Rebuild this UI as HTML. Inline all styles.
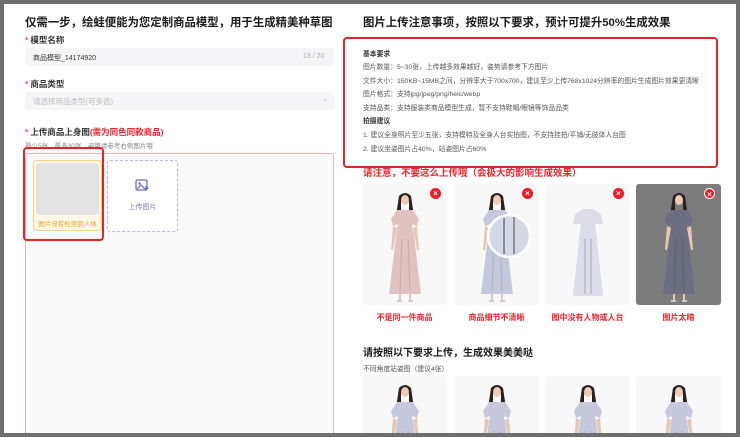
<!DOCTYPE html>
<html><head><meta charset="utf-8"><style>
*{margin:0;padding:0;box-sizing:border-box}
body{width:740px;height:437px;background:#6f6f6f;position:relative;overflow:hidden;font-family:"Liberation Sans","Noto Sans CJK SC",sans-serif;color:#222}
.panel{position:absolute;left:4px;top:4px;width:732px;height:429px;background:#fff;overflow:hidden}
.a{position:absolute;white-space:nowrap}
.h1{font-size:11.4px;font-weight:bold;color:#1a1a1a}
.lab{font-size:8.5px;font-weight:bold;color:#333}
.lab i{color:#f0507a;font-style:normal;margin-right:2px}
.box{position:absolute;background:#f5f5f7;border-radius:3px}
.req{font-size:6.8px;color:#555}
.red{color:#f5222d;font-weight:bold}
.img{position:absolute;width:85px;height:121px;background:#f8f8f8;border-radius:3px;overflow:hidden}
.x{position:absolute;right:6px;top:4px;width:11px;height:11px;border-radius:50%;background:#ee1c25;color:#fff;font-size:8px;line-height:11px;text-align:center;font-weight:bold}
.cap{position:absolute;font-size:8px;font-weight:bold;color:#f5222d;text-align:center;width:85px}
</style></head><body>
<svg width="0" height="0" style="position:absolute"><defs>
<g id="fig">
<path d="M37 12 Q43 6 49 12 L52 32 L47 32 L47 18 L39 18 L39 32 L34 32 Z" fill="#2a2220"/>
<ellipse cx="43" cy="16" rx="4" ry="5" fill="#e9cdb8"/>
<path d="M35 26 L51 26 L57 35 L55 42 L50 40 L52 52 L59 110 L27 110 L34 52 L36 40 L31 42 L29 35 Z" fill="currentColor"/>
<path d="M31 42 L29 66 L31 66 L35 44 Z M55 42 L57 66 L55 66 L51 44 Z" fill="#e5c8b3"/>
<path d="M38 110 L38 116 M48 110 L48 116" stroke="#e5c8b3" stroke-width="2"/>
<path d="M35 117 h5 M46 117 h5" stroke="#ccc" stroke-width="2"/>
<path d="M40 55 L38 108 M46 55 L48 108" stroke="rgba(0,0,0,.12)" stroke-width="1"/>
</g></defs></svg>
<div class="panel">
<div class="a h1" style="left:21px;top:10px">仅需一步，绘蛙便能为您定制商品模型，用于生成精美种草图</div>
<div class="a lab" style="left:21px;top:30px"><i>*</i>模型名称</div>
<div class="box" style="left:21px;top:44px;width:309px;height:18px"></div>
<div class="a" style="left:29px;top:49px;font-size:7px;color:#333">商品模型_14174920</div>
<div class="a" style="left:299px;top:49px;font-size:7px;color:#aaa">13 / 20</div>
<div class="a lab" style="left:21px;top:74px"><i>*</i>商品类型</div>
<div class="box" style="left:21px;top:88px;width:309px;height:18px"></div>
<div class="a" style="left:29px;top:92px;font-size:7.5px;color:#bbb">请选择商品类型(可多选)</div>
<div class="a" style="left:318px;top:91px;font-size:7px;color:#bbb">⌄</div>
<div class="a lab" style="left:21px;top:122px"><i>*</i>上传商品上身图<span style="color:#f5222d">(需为同色同款商品)</span></div>
<div class="a" style="left:21px;top:136px;font-size:6.5px;color:#888">最少5张，最多30张，姿势请参考右侧图片哦</div>
<div class="a" style="left:21px;top:149px;width:309px;height:285px;border:1px solid #f5b0b0;border-radius:3px;background:#fafafa"></div>
<div class="a" style="left:29px;top:156px;width:69px;height:71px;border:1px solid #f8d37a;border-radius:4px;background:#fff8e6;overflow:hidden">
 <div style="position:absolute;left:2px;top:2px;right:2px;height:52px;background:#e3e3e3;border-radius:4px"></div>
 <div style="position:absolute;left:0;right:0;top:57px;font-size:6.5px;color:#f0a020;text-align:center">图片没有检测到人体</div>
</div>
<div class="a" style="left:19px;top:143px;width:81px;height:94px;border:2px solid #e8212a;border-radius:4px"></div>
<div class="a" style="left:103px;top:156px;width:71px;height:72px;border:1px dashed #b8b8d8;border-radius:3px;background:#fff"></div>
<svg class="a" style="left:131px;top:175px" width="14" height="13" viewBox="0 0 14 13"><rect x="1" y="1" width="11" height="10" rx="1.5" fill="none" stroke="#6a6fc0" stroke-width="1.3"/><circle cx="4.5" cy="4.5" r="1.2" fill="#6a6fc0"/><path d="M2 10 L6 6 L9 9" fill="none" stroke="#6a6fc0" stroke-width="1.2"/><path d="M11 7 v5 M8.5 9.5 h5" stroke="#6a6fc0" stroke-width="1.2"/></svg>
<div class="a" style="left:103px;top:198px;width:71px;text-align:center;font-size:7px;color:#7a7fb8">上传图片</div>

<div class="a h1" style="left:359px;top:10px">图片上传注意事项，按照以下要求，预计可提升50%生成效果</div>
<div class="a" style="left:339px;top:33px;width:375px;height:131px;border:2px solid #e8212a;border-radius:4px"></div>
<div class="a req" style="left:359px;top:44px;font-weight:bold;color:#333">基本要求</div>
<div class="a req" style="left:359px;top:57px">图片数量：5~30张，上传越多效果越好，姿势请参考下方图片</div>
<div class="a req" style="left:359px;top:71px">文件大小：150KB~15MB之间，分辨率大于700x700，建议至少上传768x1024分辨率的图片生成图片效果更清晰</div>
<div class="a req" style="left:359px;top:84px">图片格式：支持jpg/jpeg/png/heic/webp</div>
<div class="a req" style="left:359px;top:98px">支持品类：支持服装类商品模型生成，暂不支持鞋帽/眼镜等饰品品类</div>
<div class="a req" style="left:359px;top:111px;font-weight:bold;color:#333">拍摄建议</div>
<div class="a req" style="left:359px;top:125px">1. 建议全身照片至少五张，支持模特及全身人台实拍图，不支持挂拍/平铺/无肢体人台图</div>
<div class="a req" style="left:359px;top:139px">2. 建议坐姿图片占40%，站姿图片占60%</div>
<div class="a red" style="left:359px;top:161px;font-size:9.5px">请注意，不要这么上传哦（会极大的影响生成效果）</div>

<div class="img" style="left:358px;top:180px"><svg width="85" height="121" style="color:#e2c2c0"><use href="#fig"/></svg><div class="x">×</div></div>
<div class="img" style="left:450px;top:180px"><svg width="85" height="121" style="color:#c4c8dc"><use href="#fig"/><circle cx="55" cy="52" r="21" fill="#d4d7e4" stroke="#fff" stroke-width="2.5"/><path d="M50 34 V70 M60 33 V70" stroke="#555a70" stroke-width="1.2"/></svg><div class="x">×</div></div>
<div class="img" style="left:541px;top:180px"><svg width="85" height="121" style="color:#d8d9e8"><path d="M30 30 L38 25 L48 25 L56 30 L58 40 L50 40 L52 55 L58 112 L28 112 L34 55 L36 40 L28 40 Z" fill="#dcdde9"/><path d="M40 55 V110 M46 55 V110" stroke="#9a9cb0" stroke-width=".8"/></svg><div class="x">×</div></div>
<div class="img" style="left:632px;top:180px;background:#7c7c7c"><svg width="85" height="121" style="color:#6b6e80"><use href="#fig"/></svg><div class="x" style="border:1px solid #fff">×</div></div>
<div class="cap" style="left:358px;top:308px">不是同一件商品</div>
<div class="cap" style="left:450px;top:308px">商品细节不清晰</div>
<div class="cap" style="left:541px;top:308px">图中没有人物或人台</div>
<div class="cap" style="left:632px;top:308px">图片太暗</div>

<div class="a" style="left:359px;top:340px;font-size:10px;font-weight:bold;color:#1a1a1a">请按照以下要求上传，生成效果美美哒</div>
<div class="a" style="left:359px;top:359px;font-size:6.8px;color:#555">不同角度站姿图（建议4张）</div>
<div class="img" style="left:358px;top:372px"><svg width="85" height="121" style="color:#c6c9dd"><use href="#fig"/></svg></div>
<div class="img" style="left:450px;top:372px"><svg width="85" height="121" style="color:#c6c9dd"><use href="#fig"/></svg></div>
<div class="img" style="left:541px;top:372px"><svg width="85" height="121" style="color:#c6c9dd"><use href="#fig"/></svg></div>
<div class="img" style="left:632px;top:372px"><svg width="85" height="121" style="color:#c6c9dd"><use href="#fig"/></svg></div>
</div>
</body></html>
